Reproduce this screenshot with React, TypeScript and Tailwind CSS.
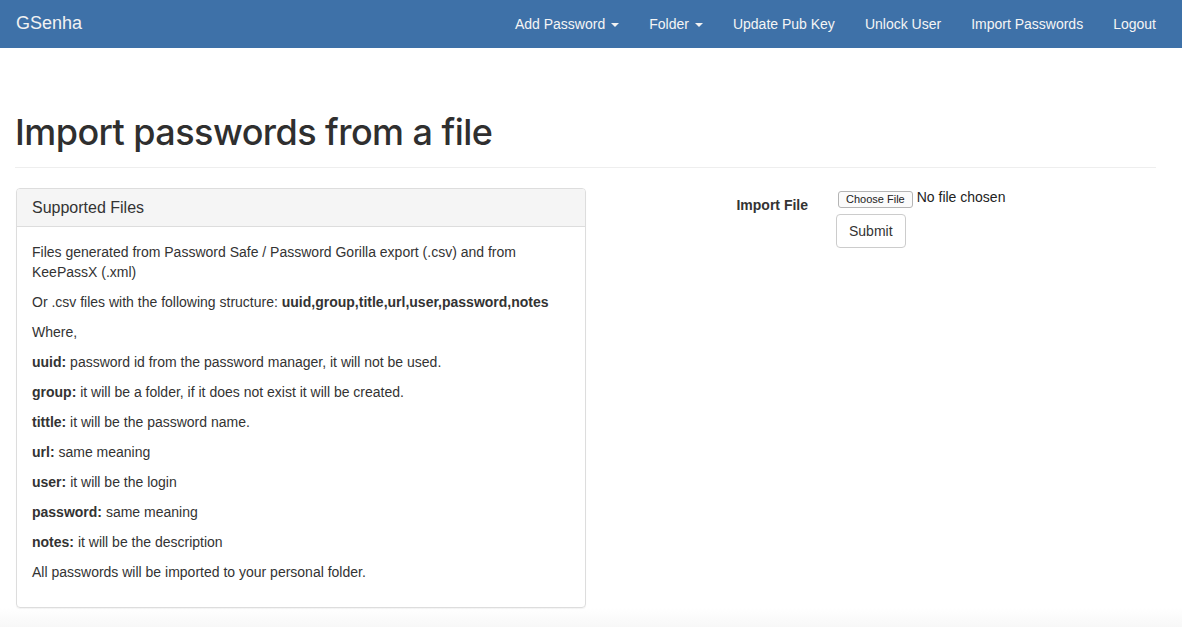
import React from 'react';

interface NavItem {
  label: string;
  dropdown?: boolean;
}

const navItems: NavItem[] = [
  { label: 'Add Password', dropdown: true },
  { label: 'Folder', dropdown: true },
  { label: 'Update Pub Key' },
  { label: 'Unlock User' },
  { label: 'Import Passwords' },
  { label: 'Logout' },
];

const fields: [string, string][] = [
  ['uuid:', 'password id from the password manager, it will not be used.'],
  ['group:', 'it will be a folder, if it does not exist it will be created.'],
  ['tittle:', 'it will be the password name.'],
  ['url:', 'same meaning'],
  ['user:', 'it will be the login'],
  ['password:', 'same meaning'],
  ['notes:', 'it will be the description'],
];

function Caret() {
  return (
    <span className="inline-block w-0 h-0 ml-[6px] align-middle border-t-[4px] border-t-[#f2f2f2] border-x-[4px] border-x-transparent" />
  );
}

function Navbar() {
  return (
    <nav className="h-[48px] bg-[#3e71a8] flex items-center justify-between pl-[16px] pr-[11px]">
      <a className="text-[18px] text-[#f2f2f2] leading-[20px] -mt-[2px]">GSenha</a>
      <ul className="flex items-center -mt-[1px]">
        {navItems.map((item, index) => (
          <li key={`${item.label}-${index}`} className="px-[15px] text-[14px] leading-[20px] text-[#f5f5f5] cursor-pointer">
            {item.label}
            {item.dropdown && <Caret />}
          </li>
        ))}
      </ul>
    </nav>
  );
}

export default function App() {
  return (
    <div className="min-h-[627px] bg-white text-[#333] text-[14px]" style={{ fontFamily: '"Liberation Sans", Arial, sans-serif' }}>
      <Navbar />

      <div className="pl-[15px] pr-[26px]">
        <h1
          className="mt-[64px] text-[36px] leading-[40px] pb-[15px] border-b border-[#eee] font-medium text-[#2f2f2f] tracking-[-0.55px]"
          style={{ fontFamily: 'Inter, "Liberation Sans", sans-serif' }}
        >
          Import passwords from a file
        </h1>

        <div className="flex mt-[20px]">
          <div className="w-[570px] ml-[1px] border border-[#ddd] rounded-[4px] shadow-[0_1px_1px_rgba(0,0,0,0.05)]">
            <div className="h-[38px] flex items-center px-[15px] bg-[#f5f5f5] border-b border-[#ddd] rounded-t-[3px] text-[16px] pt-[1px]">
              Supported Files
            </div>
            <div className="p-[15px] leading-[20px]">
              <p className="mb-[10px]">
                Files generated from Password Safe / Password Gorilla export (.csv) and from KeePassX (.xml)
              </p>
              <p className="mb-[10px]">
                Or .csv files with the following structure: <b>uuid,group,title,url,user,password,notes</b>
              </p>
              <p className="mb-[10px]">Where,</p>
              {fields.map(([key, text]) => (
                <p className="mb-[10px]" key={key}>
                  <b>{key}</b> {text}
                </p>
              ))}
              <p className="mb-[10px]">All passwords will be imported to your personal folder.</p>
            </div>
          </div>

          <form className="flex ml-[15px]">
            <label className="w-[207px] text-right font-bold pt-[7px] leading-[20px]">Import File</label>
            <div className="ml-[28px]">
              <div className="flex items-center mt-[2px] ml-[2px]">
                <span className="h-[17px] px-[7px] flex items-center border border-[#b5b5b5] rounded-[3px] bg-[#fbfbfb] text-[11px] text-[#222] leading-none">
                  Choose File
                </span>
                <span className="ml-[4px] text-[14px] text-[#222] -mt-[3px]">No file chosen</span>
              </div>
              <button
                type="button"
                className="mt-[6px] px-[12px] py-[6px] leading-[20px] text-[14px] border border-[#ccc] rounded-[4px] bg-white text-[#333]"
              >
                Submit
              </button>
            </div>
          </form>
        </div>
      </div>

      <div className="h-[20px] bg-gradient-to-b from-white to-[#f7f7f7]" />
    </div>
  );
}
